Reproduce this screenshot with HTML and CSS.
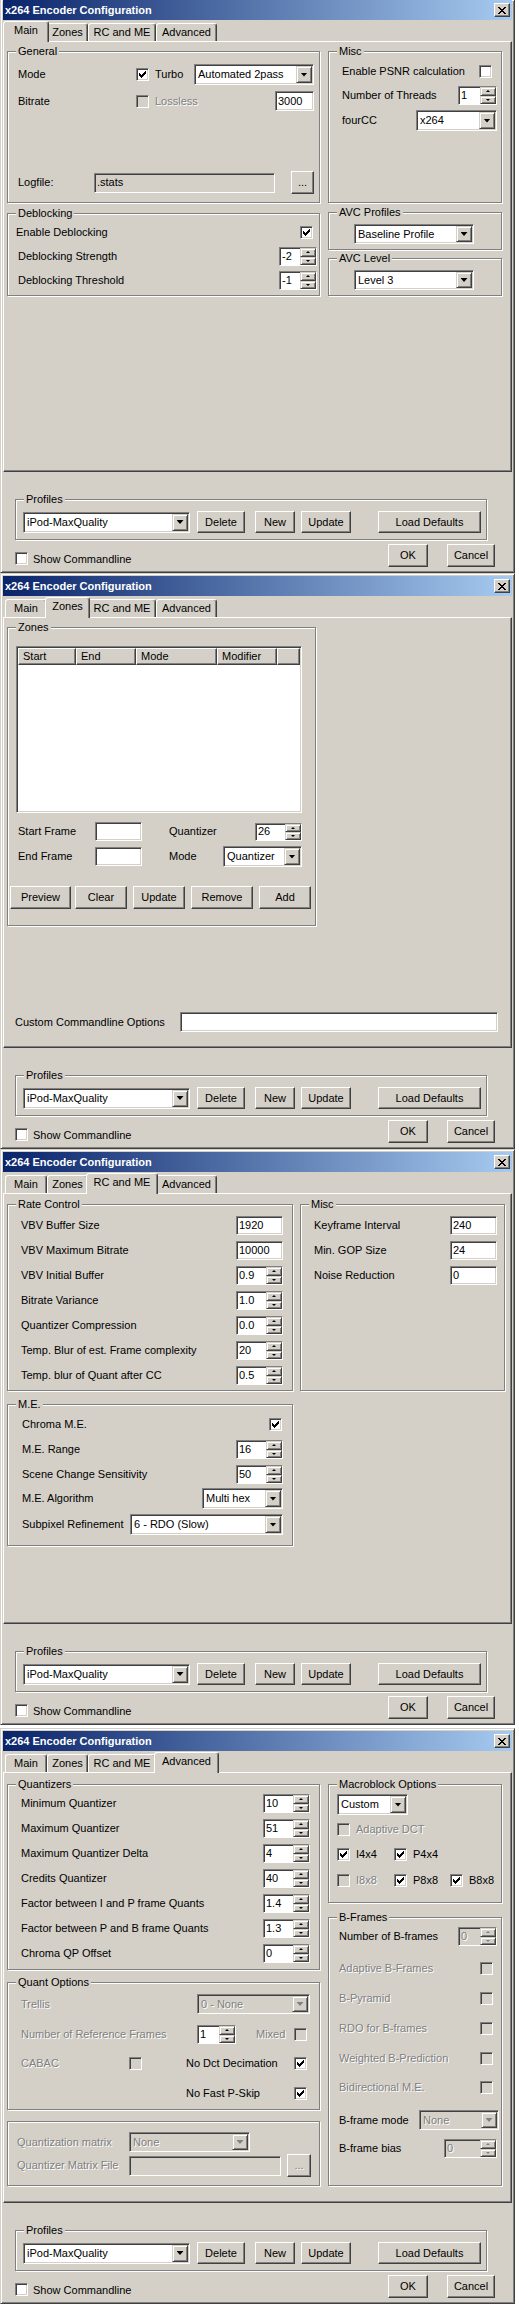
FILE: index.html
```html
<!DOCTYPE html>
<html>
<head>
<meta charset="utf-8">
<title>x264 Encoder Configuration</title>
<link rel="stylesheet" href="styles.css">
</head>
<body>

<!-- ============ WINDOW 1 : MAIN ============ -->
<div class="win first">
  <div class="title"><span class="title-text">x264 Encoder Configuration</span><span class="close"><svg class="xg" viewBox="0 0 8 7" shape-rendering="crispEdges"><path d="M0 0h2v1H0zM6 0h2v1H6zM1 1h2v1H1zM5 1h2v1H5zM2 2h4v1H2zM3 3h2v1H3zM2 4h4v1H2zM1 5h2v1H1zM5 5h2v1H5zM0 6h2v1H0zM6 6h2v1H6z"/></svg></span></div>
  <div class="tabs">
    <div class="tab t-main sel">Main</div><div class="tab t-zones">Zones</div><div class="tab t-rc">RC and ME</div><div class="tab t-adv">Advanced</div>
  </div>
  <div class="panel pt9">
    <div class="cols gap8">
      <div class="col w313">
        <div class="group h152 pl10 pr5">
          <span class="glabel">General</span>
          <div class="row mt12">
            <span class="lbl w118">Mode</span>
            <span class="cb"><svg class="chk" viewBox="0 0 7 7" shape-rendering="crispEdges"><path d="M0 2h1v3H0zM1 3h1v3H1zM2 4h1v3H2zM3 3h1v3H3zM4 2h1v3H4zM5 1h1v3H5zM6 0h1v3H6z"/></svg></span>
            <span class="lbl ml6 w39">Turbo</span>
            <span class="combo w120 h21"><span class="cval">Automated 2pass</span><span class="cbtn"></span></span>
          </div>
          <div class="row mt6">
            <span class="lbl w118">Bitrate</span>
            <span class="cb dis"></span>
            <span class="lbl dis ml6">Lossless</span>
            <span class="grow"></span>
            <span class="edit w39 h20">3000</span>
          </div>
          <div class="row mt60">
            <span class="lbl w76">Logfile:</span>
            <span class="edit ro w181 h20">.stats</span>
            <span class="grow"></span>
            <span class="btn w23 h23">...</span>
          </div>
        </div>
        <div class="group h83 mt10 pl8 pr2">
          <span class="glabel">Deblocking</span>
          <div class="row mt12">
            <span class="lbl">Enable Deblocking</span><span class="grow"></span>
            <span class="cb mr4"><svg class="chk" viewBox="0 0 7 7" shape-rendering="crispEdges"><path d="M0 2h1v3H0zM1 3h1v3H1zM2 4h1v3H2zM3 3h1v3H3zM4 2h1v3H4zM5 1h1v3H5zM6 0h1v3H6z"/></svg></span>
          </div>
          <div class="row mt8">
            <span class="lbl ml2">Deblocking Strength</span><span class="grow"></span>
            <span class="spin w38 h19"><span class="sval">-2</span><span class="sbtns"><span class="sb up"></span><span class="sb dn"></span></span></span>
          </div>
          <div class="row mt5">
            <span class="lbl ml2">Deblocking Threshold</span><span class="grow"></span>
            <span class="spin w38 h19"><span class="sval">-1</span><span class="sbtns"><span class="sb up"></span><span class="sb dn"></span></span></span>
          </div>
        </div>
      </div>
      <div class="col w174">
        <div class="group h152 pl13 pr4">
          <span class="glabel">Misc</span>
          <div class="row mt13">
            <span class="lbl">Enable PSNR calculation</span><span class="grow"></span>
            <span class="cb mr5"></span>
          </div>
          <div class="row mt8">
            <span class="lbl">Number of Threads</span><span class="grow"></span>
            <span class="spin w39 h19"><span class="sval">1</span><span class="sbtns"><span class="sb up"></span><span class="sb dn"></span></span></span>
          </div>
          <div class="row mt5">
            <span class="lbl">fourCC</span><span class="grow"></span>
            <span class="combo w81 h21"><span class="cval">x264</span><span class="cbtn"></span></span>
          </div>
        </div>
        <div class="group h38 mt9 pl25">
          <span class="glabel">AVC Profiles</span>
          <div class="row mt11"><span class="combo w120 h20"><span class="cval">Baseline Profile</span><span class="cbtn"></span></span></div>
        </div>
        <div class="group h38 mt8 pl25">
          <span class="glabel">AVC Level</span>
          <div class="row mt11"><span class="combo w120 h20"><span class="cval">Level 3</span><span class="cbtn"></span></span></div>
        </div>
      </div>
    </div>
  </div>
  <div class="bottom">
    <div class="group prof">
      <span class="glabel">Profiles</span>
      <div class="row mt11">
        <span class="combo w167 h21"><span class="cval">iPod-MaxQuality</span><span class="cbtn"></span></span>
        <span class="btn w48 h22 ml7">Delete</span>
        <span class="btn w40 h22 ml10">New</span>
        <span class="btn w50 h22 ml6">Update</span>
        <span class="btn w103 h22 ml27">Load Defaults</span>
      </div>
    </div>
    <div class="footer">
      <span class="cb fcb"></span><span class="lbl flbl">Show Commandline</span>
      <span class="grow"></span>
      <span class="btn w40 h23">OK</span>
      <span class="btn w48 h23 ml19">Cancel</span>
    </div>
  </div>
</div>

<!-- ============ WINDOW 2 : ZONES ============ -->
<div class="win">
  <div class="title"><span class="title-text">x264 Encoder Configuration</span><span class="close"><svg class="xg" viewBox="0 0 8 7" shape-rendering="crispEdges"><path d="M0 0h2v1H0zM6 0h2v1H6zM1 1h2v1H1zM5 1h2v1H5zM2 2h4v1H2zM3 3h2v1H3zM2 4h4v1H2zM1 5h2v1H1zM5 5h2v1H5zM0 6h2v1H0zM6 6h2v1H6z"/></svg></span></div>
  <div class="tabs">
    <div class="tab t-main">Main</div><div class="tab t-zones sel">Zones</div><div class="tab t-rc">RC and ME</div><div class="tab t-adv">Advanced</div>
  </div>
  <div class="panel pt9">
    <div class="group w309 h299 pl2">
      <span class="glabel">Zones</span>
      <div class="lv mt18 ml6">
        <div class="lvh">
          <span class="w58">Start</span><span class="w60">End</span><span class="w81">Mode</span><span class="w60">Modifier</span><span class="grow"></span>
        </div>
      </div>
      <div class="row mt9 ml8">
        <span class="lbl w77">Start Frame</span>
        <span class="edit w47 h19"></span>
        <span class="lbl ml27 w86">Quantizer</span>
        <span class="spin w47 h18"><span class="sval">26</span><span class="sbtns"><span class="sb up"></span><span class="sb dn"></span></span></span>
      </div>
      <div class="row mt5 ml8">
        <span class="lbl w77">End Frame</span>
        <span class="edit w47 h19"></span>
        <span class="lbl ml27 w54">Mode</span>
        <span class="combo w79 h21"><span class="cval">Quantizer</span><span class="cbtn"></span></span>
      </div>
      <div class="row mt19">
        <span class="btn w61 h23">Preview</span>
        <span class="btn w52 h23 ml4">Clear</span>
        <span class="btn w52 h23 ml6">Update</span>
        <span class="btn w62 h23 ml6">Remove</span>
        <span class="btn w52 h23 ml6">Add</span>
      </div>
    </div>
    <div class="row mt86 ml8">
      <span class="lbl w165">Custom Commandline Options</span>
      <span class="edit w318 h20"></span>
    </div>
  </div>
  <div class="bottom">
    <div class="group prof">
      <span class="glabel">Profiles</span>
      <div class="row mt11">
        <span class="combo w167 h21"><span class="cval">iPod-MaxQuality</span><span class="cbtn"></span></span>
        <span class="btn w48 h22 ml7">Delete</span>
        <span class="btn w40 h22 ml10">New</span>
        <span class="btn w50 h22 ml6">Update</span>
        <span class="btn w103 h22 ml27">Load Defaults</span>
      </div>
    </div>
    <div class="footer">
      <span class="cb fcb"></span><span class="lbl flbl">Show Commandline</span>
      <span class="grow"></span>
      <span class="btn w40 h23">OK</span>
      <span class="btn w48 h23 ml19">Cancel</span>
    </div>
  </div>
</div>

<!-- ============ WINDOW 3 : RC AND ME ============ -->
<div class="win">
  <div class="title"><span class="title-text">x264 Encoder Configuration</span><span class="close"><svg class="xg" viewBox="0 0 8 7" shape-rendering="crispEdges"><path d="M0 0h2v1H0zM6 0h2v1H6zM1 1h2v1H1zM5 1h2v1H5zM2 2h4v1H2zM3 3h2v1H3zM2 4h4v1H2zM1 5h2v1H1zM5 5h2v1H5zM0 6h2v1H0zM6 6h2v1H6z"/></svg></span></div>
  <div class="tabs">
    <div class="tab t-main">Main</div><div class="tab t-zones">Zones</div><div class="tab t-rc sel">RC and ME</div><div class="tab t-adv">Advanced</div>
  </div>
  <div class="panel pt10">
    <div class="cols gap7">
      <div class="col w286">
        <div class="group h187 pl13 pr9">
          <span class="glabel">Rate Control</span>
          <div class="row mt11"><span class="lbl">VBV Buffer Size</span><span class="grow"></span><span class="edit w47 h19">1920</span></div>
          <div class="row mt6"><span class="lbl">VBV Maximum Bitrate</span><span class="grow"></span><span class="edit w47 h19">10000</span></div>
          <div class="row mt6"><span class="lbl">VBV Initial Buffer</span><span class="grow"></span><span class="spin w47 h19"><span class="sval">0.9</span><span class="sbtns"><span class="sb up"></span><span class="sb dn"></span></span></span></div>
          <div class="row mt6"><span class="lbl">Bitrate Variance</span><span class="grow"></span><span class="spin w47 h19"><span class="sval">1.0</span><span class="sbtns"><span class="sb up"></span><span class="sb dn"></span></span></span></div>
          <div class="row mt6"><span class="lbl">Quantizer Compression</span><span class="grow"></span><span class="spin w47 h19"><span class="sval">0.0</span><span class="sbtns"><span class="sb up"></span><span class="sb dn"></span></span></span></div>
          <div class="row mt6"><span class="lbl">Temp. Blur of est. Frame complexity</span><span class="grow"></span><span class="spin w47 h19"><span class="sval">20</span><span class="sbtns"><span class="sb up"></span><span class="sb dn"></span></span></span></div>
          <div class="row mt6"><span class="lbl">Temp. blur of Quant after CC</span><span class="grow"></span><span class="spin w47 h19"><span class="sval">0.5</span><span class="sbtns"><span class="sb up"></span><span class="sb dn"></span></span></span></div>
        </div>
        <div class="group h142 mt13 pl14 pr9">
          <span class="glabel">M.E.</span>
          <div class="row mt13"><span class="lbl">Chroma M.E.</span><span class="grow"></span><span class="cb mr1"><svg class="chk" viewBox="0 0 7 7" shape-rendering="crispEdges"><path d="M0 2h1v3H0zM1 3h1v3H1zM2 4h1v3H2zM3 3h1v3H3zM4 2h1v3H4zM5 1h1v3H5zM6 0h1v3H6z"/></svg></span></div>
          <div class="row mt9"><span class="lbl">M.E. Range</span><span class="grow"></span><span class="spin w47 h19"><span class="sval">16</span><span class="sbtns"><span class="sb up"></span><span class="sb dn"></span></span></span></div>
          <div class="row mt6"><span class="lbl">Scene Change Sensitivity</span><span class="grow"></span><span class="spin w47 h19"><span class="sval">50</span><span class="sbtns"><span class="sb up"></span><span class="sb dn"></span></span></span></div>
          <div class="row mt4"><span class="lbl">M.E. Algorithm</span><span class="grow"></span><span class="combo w81 h21"><span class="cval">Multi hex</span><span class="cbtn"></span></span></div>
          <div class="row mt5"><span class="lbl">Subpixel Refinement</span><span class="grow"></span><span class="combo w153 h21"><span class="cval">6 - RDO (Slow)</span><span class="cbtn"></span></span></div>
        </div>
      </div>
      <div class="col w205">
        <div class="group h187 pl13 pr7">
          <span class="glabel">Misc</span>
          <div class="row mt11"><span class="lbl">Keyframe Interval</span><span class="grow"></span><span class="edit w47 h19">240</span></div>
          <div class="row mt6"><span class="lbl">Min. GOP Size</span><span class="grow"></span><span class="edit w47 h19">24</span></div>
          <div class="row mt6"><span class="lbl">Noise Reduction</span><span class="grow"></span><span class="edit w47 h19">0</span></div>
        </div>
      </div>
    </div>
  </div>
  <div class="bottom">
    <div class="group prof">
      <span class="glabel">Profiles</span>
      <div class="row mt11">
        <span class="combo w167 h21"><span class="cval">iPod-MaxQuality</span><span class="cbtn"></span></span>
        <span class="btn w48 h22 ml7">Delete</span>
        <span class="btn w40 h22 ml10">New</span>
        <span class="btn w50 h22 ml6">Update</span>
        <span class="btn w103 h22 ml27">Load Defaults</span>
      </div>
    </div>
    <div class="footer">
      <span class="cb fcb"></span><span class="lbl flbl">Show Commandline</span>
      <span class="grow"></span>
      <span class="btn w40 h23">OK</span>
      <span class="btn w48 h23 ml19">Cancel</span>
    </div>
  </div>
</div>

<!-- ============ WINDOW 4 : ADVANCED ============ -->
<div class="win last">
  <div class="title"><span class="title-text">x264 Encoder Configuration</span><span class="close"><svg class="xg" viewBox="0 0 8 7" shape-rendering="crispEdges"><path d="M0 0h2v1H0zM6 0h2v1H6zM1 1h2v1H1zM5 1h2v1H5zM2 2h4v1H2zM3 3h2v1H3zM2 4h4v1H2zM1 5h2v1H1zM5 5h2v1H5zM0 6h2v1H0zM6 6h2v1H6z"/></svg></span></div>
  <div class="tabs">
    <div class="tab t-main">Main</div><div class="tab t-zones">Zones</div><div class="tab t-rc">RC and ME</div><div class="tab t-adv sel">Advanced</div>
  </div>
  <div class="panel pt11">
    <div class="cols gap8">
      <div class="col w313">
        <div class="group h186 pl13 pr9">
          <span class="glabel">Quantizers</span>
          <div class="row mt9"><span class="lbl">Minimum Quantizer</span><span class="grow"></span><span class="spin w47 h19"><span class="sval">10</span><span class="sbtns"><span class="sb up"></span><span class="sb dn"></span></span></span></div>
          <div class="row mt6"><span class="lbl">Maximum Quantizer</span><span class="grow"></span><span class="spin w47 h19"><span class="sval">51</span><span class="sbtns"><span class="sb up"></span><span class="sb dn"></span></span></span></div>
          <div class="row mt6"><span class="lbl">Maximum Quantizer Delta</span><span class="grow"></span><span class="spin w47 h19"><span class="sval">4</span><span class="sbtns"><span class="sb up"></span><span class="sb dn"></span></span></span></div>
          <div class="row mt6"><span class="lbl">Credits Quantizer</span><span class="grow"></span><span class="spin w47 h19"><span class="sval">40</span><span class="sbtns"><span class="sb up"></span><span class="sb dn"></span></span></span></div>
          <div class="row mt6"><span class="lbl">Factor between I and P frame Quants</span><span class="grow"></span><span class="spin w47 h19"><span class="sval">1.4</span><span class="sbtns"><span class="sb up"></span><span class="sb dn"></span></span></span></div>
          <div class="row mt6"><span class="lbl">Factor between P and B frame Quants</span><span class="grow"></span><span class="spin w47 h19"><span class="sval">1.3</span><span class="sbtns"><span class="sb up"></span><span class="sb dn"></span></span></span></div>
          <div class="row mt6"><span class="lbl">Chroma QP Offset</span><span class="grow"></span><span class="spin w47 h19"><span class="sval">0</span><span class="sbtns"><span class="sb up"></span><span class="sb dn"></span></span></span></div>
        </div>
        <div class="group h128 mt12 pl13">
          <span class="glabel">Quant Options</span>
          <div class="row mt11">
            <span class="lbl dis w176">Trellis</span>
            <span class="combo dis w113 h20"><span class="cval">0 - None</span><span class="cbtn"></span></span>
          </div>
          <div class="row mt11">
            <span class="lbl dis w176">Number of Reference Frames</span>
            <span class="spin w39 h19"><span class="sval">1</span><span class="sbtns"><span class="sb up"></span><span class="sb dn"></span></span></span>
            <span class="lbl dis ml20 w38">Mixed</span>
            <span class="cb dis"></span>
          </div>
          <div class="row mt13">
            <span class="lbl dis w108">CABAC</span>
            <span class="cb dis"></span>
            <span class="lbl ml44 w108">No Dct Decimation</span>
            <span class="cb"><svg class="chk" viewBox="0 0 7 7" shape-rendering="crispEdges"><path d="M0 2h1v3H0zM1 3h1v3H1zM2 4h1v3H2zM3 3h1v3H3zM4 2h1v3H4zM5 1h1v3H5zM6 0h1v3H6z"/></svg></span>
          </div>
          <div class="row mt17">
            <span class="w165"></span>
            <span class="lbl w108">No Fast P-Skip</span>
            <span class="cb"><svg class="chk" viewBox="0 0 7 7" shape-rendering="crispEdges"><path d="M0 2h1v3H0zM1 3h1v3H1zM2 4h1v3H2zM3 3h1v3H3zM4 2h1v3H4zM5 1h1v3H5zM6 0h1v3H6z"/></svg></span>
          </div>
        </div>
        <div class="group h65 mt11 pl9">
          <div class="row mt10">
            <span class="lbl dis w112">Quantization matrix</span>
            <span class="combo dis w121 h20"><span class="cval">None</span><span class="cbtn"></span></span>
          </div>
          <div class="row mt2">
            <span class="lbl dis w112">Quantizer Matrix File</span>
            <span class="edit dis w152 h20"></span>
            <span class="btn dis w24 h23 ml6">...</span>
          </div>
        </div>
      </div>
      <div class="col w174">
        <div class="group h119 pl8">
          <span class="glabel">Macroblock Options</span>
          <div class="row mt9"><span class="combo w71 h21"><span class="cval">Custom</span><span class="cbtn"></span></span></div>
          <div class="row mt8"><span class="cb dis"></span><span class="lbl dis ml6">Adaptive DCT</span></div>
          <div class="row mt12">
            <span class="cb"><svg class="chk" viewBox="0 0 7 7" shape-rendering="crispEdges"><path d="M0 2h1v3H0zM1 3h1v3H1zM2 4h1v3H2zM3 3h1v3H3zM4 2h1v3H4zM5 1h1v3H5zM6 0h1v3H6z"/></svg></span><span class="lbl ml6 w38">I4x4</span>
            <span class="cb"><svg class="chk" viewBox="0 0 7 7" shape-rendering="crispEdges"><path d="M0 2h1v3H0zM1 3h1v3H1zM2 4h1v3H2zM3 3h1v3H3zM4 2h1v3H4zM5 1h1v3H5zM6 0h1v3H6z"/></svg></span><span class="lbl ml6">P4x4</span>
          </div>
          <div class="row mt13">
            <span class="cb dis"></span><span class="lbl dis ml6 w38">I8x8</span>
            <span class="cb"><svg class="chk" viewBox="0 0 7 7" shape-rendering="crispEdges"><path d="M0 2h1v3H0zM1 3h1v3H1zM2 4h1v3H2zM3 3h1v3H3zM4 2h1v3H4zM5 1h1v3H5zM6 0h1v3H6z"/></svg></span><span class="lbl ml6 w37">P8x8</span>
            <span class="cb"><svg class="chk" viewBox="0 0 7 7" shape-rendering="crispEdges"><path d="M0 2h1v3H0zM1 3h1v3H1zM2 4h1v3H2zM3 3h1v3H3zM4 2h1v3H4zM5 1h1v3H5zM6 0h1v3H6z"/></svg></span><span class="lbl ml6">B8x8</span>
          </div>
        </div>
        <div class="group h269 mt14 pl10">
          <span class="glabel">B-Frames</span>
          <div class="row mt9"><span class="lbl">Number of B-frames</span><span class="grow"></span><span class="spin dis w39 h19 mr4"><span class="sval">0</span><span class="sbtns"><span class="sb up"></span><span class="sb dn"></span></span></span></div>
          <div class="row mt16"><span class="lbl dis">Adaptive B-Frames</span><span class="grow"></span><span class="cb dis mr8"></span></div>
          <div class="row mt17"><span class="lbl dis">B-Pyramid</span><span class="grow"></span><span class="cb dis mr8"></span></div>
          <div class="row mt17"><span class="lbl dis">RDO for B-frames</span><span class="grow"></span><span class="cb dis mr8"></span></div>
          <div class="row mt17"><span class="lbl dis">Weighted B-Prediction</span><span class="grow"></span><span class="cb dis mr8"></span></div>
          <div class="row mt16"><span class="lbl dis">Bidirectional M.E.</span><span class="grow"></span><span class="cb dis mr8"></span></div>
          <div class="row mt16"><span class="lbl">B-frame mode</span><span class="grow"></span><span class="combo dis w80 h20 mr2"><span class="cval">None</span><span class="cbtn"></span></span></div>
          <div class="row mt9"><span class="lbl">B-frame bias</span><span class="grow"></span><span class="spin dis w53 h19 mr4"><span class="sval">0</span><span class="sbtns"><span class="sb up"></span><span class="sb dn"></span></span></span></div>
        </div>
      </div>
    </div>
  </div>
  <div class="bottom">
    <div class="group prof">
      <span class="glabel">Profiles</span>
      <div class="row mt11">
        <span class="combo w167 h21"><span class="cval">iPod-MaxQuality</span><span class="cbtn"></span></span>
        <span class="btn w48 h22 ml7">Delete</span>
        <span class="btn w40 h22 ml10">New</span>
        <span class="btn w50 h22 ml6">Update</span>
        <span class="btn w103 h22 ml27">Load Defaults</span>
      </div>
    </div>
    <div class="footer">
      <span class="cb fcb"></span><span class="lbl flbl">Show Commandline</span>
      <span class="grow"></span>
      <span class="btn w40 h23">OK</span>
      <span class="btn w48 h23 ml19">Cancel</span>
    </div>
  </div>
</div>

</body>
</html>
```

FILE: styles.css
```css
* { box-sizing: border-box; }

body {
  margin: 0;
  width: 519px;
  background: #ffffff;
  color: #000;
  font: 11px/13px "Liberation Sans", Arial, sans-serif;
}

/* ---------- window frame ---------- */
.win {
  width: 515px;
  background: #d4d0c8;
  border: 1px solid;
  border-color: #d4d0c8 #404040 #404040 #d4d0c8;
  box-shadow: inset 1px 1px 0 #fff, inset -1px -1px 0 #808080;
  padding: 2px;
}
.win.first { border-top: 0; padding-top: 0; }
.win.last { margin-top: 3px; }

.title {
  height: 20px;
  display: flex;
  align-items: center;
  padding: 0 2px;
  background: linear-gradient(to right, #0a246a, #a6caf0);
  color: #fff;
  font-weight: bold;
}
.title-text { flex: 1; white-space: nowrap; }
.close {
  width: 16px;
  height: 14px;
  display: flex;
  align-items: center;
  justify-content: center;
  background: #d4d0c8;
  border: 1px solid;
  border-color: #fff #404040 #404040 #fff;
  box-shadow: inset -1px -1px 0 #808080;
}
.xg { width: 8px; height: 7px; display: block; fill: #000; }

/* ---------- tabs ---------- */
.tabs {
  height: 20px;
  margin-top: 1px;
  display: flex;
  align-items: flex-end;
  padding-left: 2px;
}
.tab {
  height: 18px;
  border: 1px solid;
  border-bottom: 0;
  border-color: #fff #404040 transparent #fff;
  border-radius: 3px 3px 0 0;
  box-shadow: inset -1px 0 0 #808080;
  text-align: center;
  line-height: 17px;
  flex: none;
  white-space: nowrap;
}
.tab.sel {
  height: 21px;
  margin: 0 -2px -1px;
  position: relative;
  z-index: 1;
  background: #d4d0c8;
  line-height: 17px;
}
.t-main { width: 42px; }
.t-zones { width: 41px; }
.t-rc { width: 68px; }
.t-adv { width: 61px; }
.t-main.sel { width: 46px; }
.t-zones.sel { width: 45px; }
.t-rc.sel { width: 72px; }
.t-adv.sel { width: 65px; }

/* ---------- tab panel ---------- */
.panel {
  height: 431px;
  border: 1px solid;
  border-color: #fff #404040 #404040 #fff;
  box-shadow: inset -1px -1px 0 #808080;
  padding-left: 3px;
}
.pt9 { padding-top: 9px; }
.pt10 { padding-top: 10px; }
.pt11 { padding-top: 11px; }

.cols { display: flex; align-items: flex-start; }
.gap7 { gap: 7px; }
.gap8 { gap: 8px; }
.col { display: flex; flex-direction: column; flex: none; }

/* ---------- group box ---------- */
.group {
  position: relative;
  border: 1px solid #808080;
  box-shadow: 1px 1px 0 #fff, inset 1px 1px 0 #fff;
  flex: none;
}
.glabel {
  position: absolute;
  top: -7px;
  left: 8px;
  padding: 0 2px;
  background: #d4d0c8;
  line-height: 13px;
  white-space: nowrap;
}

/* ---------- rows ---------- */
.row { display: flex; align-items: center; }
.grow { flex: 1; }
.lbl { white-space: nowrap; flex: none; }
.dis { color: #808080; text-shadow: 1px 1px 0 #fff; }

/* ---------- checkbox ---------- */
.cb {
  width: 13px;
  height: 13px;
  flex: none;
  background: #fff;
  border: 1px solid;
  border-color: #808080 #fff #fff #808080;
  box-shadow: inset 1px 1px 0 #404040, inset -1px -1px 0 #d4d0c8;
  display: flex;
  align-items: center;
  justify-content: center;
}
.cb.dis { background: #d4d0c8; }
.chk { width: 7px; height: 7px; display: block; fill: #000; }

/* ---------- edit ---------- */
.edit {
  flex: none;
  display: flex;
  align-items: center;
  padding-left: 2px;
  background: #fff;
  border: 1px solid;
  border-color: #808080 #fff #fff #808080;
  box-shadow: inset 1px 1px 0 #404040, inset -1px -1px 0 #d4d0c8;
  white-space: nowrap;
  overflow: hidden;
}
.edit.ro, .edit.dis { background: #d4d0c8; }

/* ---------- spin ---------- */
.spin {
  flex: none;
  display: flex;
  background: #fff;
  border: 1px solid;
  border-color: #808080 #fff #fff #808080;
}
.spin .sval {
  flex: 1;
  display: flex;
  align-items: center;
  padding-left: 2px;
  box-shadow: inset 1px 1px 0 #404040;
  white-space: nowrap;
  overflow: hidden;
}
.sbtns { width: 16px; display: flex; flex-direction: column; flex: none; }
.sb {
  flex: 1;
  display: flex;
  align-items: center;
  justify-content: center;
  background: #d4d0c8;
  border: 1px solid;
  border-color: #d4d0c8 #404040 #404040 #d4d0c8;
  box-shadow: inset 1px 1px 0 #fff, inset -1px -1px 0 #808080;
}
.sb::after { content: ""; width: 0; height: 0; border-left: 2px solid transparent; border-right: 2px solid transparent; }
.sb.up::after { border-bottom: 2px solid #000; }
.sb.dn::after { border-top: 2px solid #000; }
.spin.dis { background: #d4d0c8; }
.spin.dis .sval { color: #808080; text-shadow: 1px 1px 0 #fff; }
.spin.dis .sb.up::after { border-bottom-color: #808080; }
.spin.dis .sb.dn::after { border-top-color: #808080; }

/* ---------- combo ---------- */
.combo {
  flex: none;
  display: flex;
  padding: 1px;
  background: #fff;
  border: 1px solid;
  border-color: #808080 #fff #fff #808080;
  box-shadow: inset 1px 1px 0 #404040, inset -1px -1px 0 #d4d0c8;
}
.cval {
  flex: 1;
  display: flex;
  align-items: center;
  padding-left: 2px;
  white-space: nowrap;
  overflow: hidden;
}
.cbtn {
  width: 16px;
  flex: none;
  display: flex;
  align-items: center;
  justify-content: center;
  background: #d4d0c8;
  border: 1px solid;
  border-color: #d4d0c8 #404040 #404040 #d4d0c8;
  box-shadow: inset 1px 1px 0 #fff, inset -1px -1px 0 #808080;
}
.cbtn::after {
  content: "";
  width: 7px;
  height: 4px;
  background: #000;
  clip-path: polygon(0 0, 100% 0, 50% 100%);
}
.combo.dis { background: #d4d0c8; }
.combo.dis .cval { color: #808080; text-shadow: 1px 1px 0 #fff; }
.combo.dis .cbtn::after { background: #808080; }

/* ---------- push button ---------- */
.btn {
  flex: none;
  display: flex;
  align-items: center;
  justify-content: center;
  background: #d4d0c8;
  border: 1px solid;
  border-color: #fff #404040 #404040 #fff;
  box-shadow: inset -1px -1px 0 #808080;
  white-space: nowrap;
}

/* ---------- list view ---------- */
.lv {
  width: 286px;
  height: 167px;
  padding: 1px;
  background: #fff;
  border: 1px solid;
  border-color: #808080 #fff #fff #808080;
  box-shadow: inset 1px 1px 0 #404040, inset -1px -1px 0 #d4d0c8;
}
.lvh { display: flex; height: 17px; }
.lvh span {
  flex: none;
  display: flex;
  align-items: center;
  padding-left: 4px;
  background: #d4d0c8;
  border: 1px solid;
  border-color: #fff #404040 #404040 #fff;
  box-shadow: inset -1px -1px 0 #808080;
}
.lvh span.grow { flex: 1; }

/* ---------- bottom area ---------- */
.bottom { height: 98px; padding-top: 27px; }
.prof { width: 472px; height: 41px; margin-left: 12px; padding-left: 7px; }
.footer {
  display: flex;
  height: 23px;
  margin-top: 4px;
  padding-left: 12px;
  padding-right: 17px;
}
.fcb { align-self: flex-end; margin-bottom: 2px; }
.flbl { align-self: flex-end; margin-bottom: 1px; margin-left: 5px; }

/* ---------- sizes ---------- */
.w23 { width: 23px; } .w24 { width: 24px; } .w37 { width: 37px; } .w38 { width: 38px; }
.w39 { width: 39px; } .w40 { width: 40px; } .w47 { width: 47px; } .w48 { width: 48px; }
.w50 { width: 50px; } .w52 { width: 52px; } .w53 { width: 53px; } .w54 { width: 54px; }
.w58 { width: 58px; } .w60 { width: 60px; } .w61 { width: 61px; } .w62 { width: 62px; }
.w71 { width: 71px; } .w76 { width: 76px; } .w77 { width: 77px; } .w79 { width: 79px; }
.w80 { width: 80px; } .w81 { width: 81px; } .w86 { width: 86px; } .w103 { width: 103px; }
.w108 { width: 108px; } .w112 { width: 112px; } .w113 { width: 113px; } .w118 { width: 118px; }
.w120 { width: 120px; } .w121 { width: 121px; } .w152 { width: 152px; } .w153 { width: 153px; }
.w165 { width: 165px; flex: none; } .w167 { width: 167px; } .w174 { width: 174px; } .w176 { width: 176px; }
.w181 { width: 181px; } .w205 { width: 205px; } .w286 { width: 286px; } .w309 { width: 309px; }
.w313 { width: 313px; } .w318 { width: 318px; }

.h18 { height: 18px; } .h19 { height: 19px; } .h20 { height: 20px; } .h21 { height: 21px; }
.h22 { height: 22px; } .h23 { height: 23px; } .h38 { height: 38px; } .h65 { height: 65px; }
.h83 { height: 83px; } .h119 { height: 119px; } .h128 { height: 128px; } .h142 { height: 142px; }
.h152 { height: 152px; } .h186 { height: 186px; } .h187 { height: 187px; } .h269 { height: 269px; }
.h299 { height: 299px; }

.mt2 { margin-top: 2px; } .mt4 { margin-top: 4px; } .mt5 { margin-top: 5px; } .mt6 { margin-top: 6px; }
.mt8 { margin-top: 8px; } .mt9 { margin-top: 9px; } .mt10 { margin-top: 10px; } .mt11 { margin-top: 11px; }
.mt12 { margin-top: 12px; } .mt13 { margin-top: 13px; } .mt14 { margin-top: 14px; } .mt16 { margin-top: 16px; }
.mt17 { margin-top: 17px; } .mt18 { margin-top: 18px; } .mt19 { margin-top: 19px; } .mt60 { margin-top: 60px; }
.mt86 { margin-top: 86px; }

.ml2 { margin-left: 2px; } .ml4 { margin-left: 4px; } .ml6 { margin-left: 6px; } .ml7 { margin-left: 7px; }
.ml8 { margin-left: 8px; } .ml10 { margin-left: 10px; } .ml19 { margin-left: 19px; } .ml20 { margin-left: 20px; }
.ml27 { margin-left: 27px; } .ml44 { margin-left: 44px; }

.mr1 { margin-right: 1px; } .mr2 { margin-right: 2px; } .mr4 { margin-right: 4px; } .mr5 { margin-right: 5px; }
.mr8 { margin-right: 8px; }

.pl2 { padding-left: 2px; } .pl8 { padding-left: 8px; } .pl9 { padding-left: 9px; } .pl10 { padding-left: 10px; }
.pl13 { padding-left: 13px; } .pl14 { padding-left: 14px; } .pl25 { padding-left: 25px; }
.pr2 { padding-right: 2px; } .pr4 { padding-right: 4px; } .pr5 { padding-right: 5px; } .pr7 { padding-right: 7px; }
.pr9 { padding-right: 9px; }
```
